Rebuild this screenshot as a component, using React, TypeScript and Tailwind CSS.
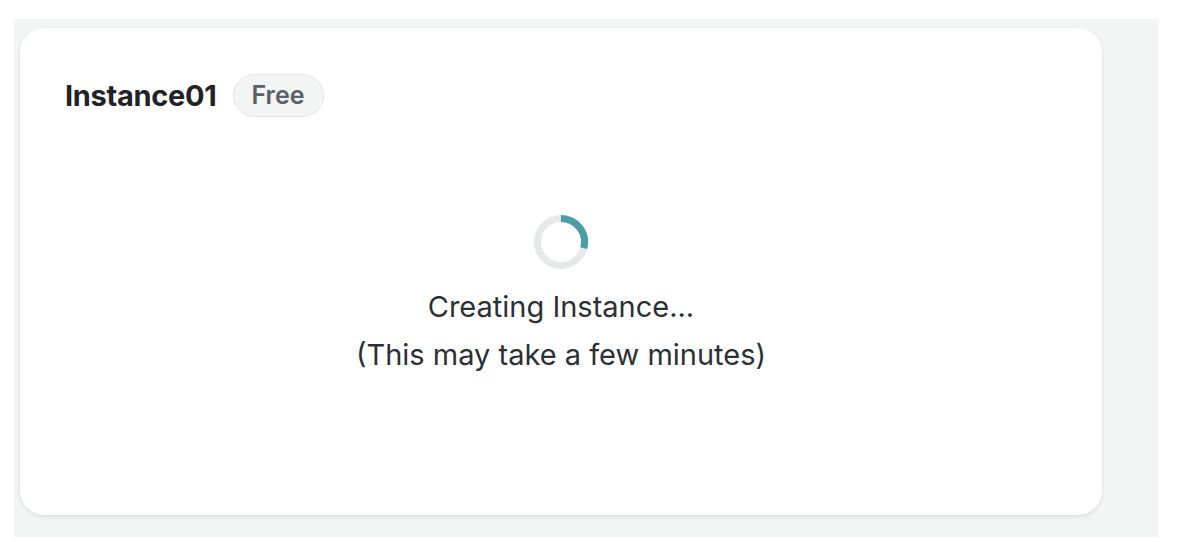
import React from 'react'

const Spinner = () => {
  return (
    <svg width="54" height="54" viewBox="0 0 54 54" fill="none">
      <circle cx="27" cy="27" r="23.5" stroke="#e6e8e9" strokeWidth="7" />
      <path d="M27 3.5 A23.5 23.5 0 0 1 49.7 33.1" stroke="#4b9ea6" strokeWidth="7" />
    </svg>
  )
}

const App = () => {
  return (
    <div className="w-full h-[542px] bg-white pl-[14px] pt-[19px] pr-[22px] pb-[5px] font-['Inter',sans-serif]">
      <div className="h-full bg-[#f3f4f4] pl-[6px] pt-[9px] pr-[56px] pb-[22px]">
        <div className="h-full bg-white rounded-[24px] shadow-[0_2px_4px_rgba(0,0,0,0.08),0_0_2px_rgba(0,0,0,0.05)] pl-[45px] pt-[46px]">
          <div className="flex items-center gap-[16px] h-[43px]">
            <span className="text-[29px] font-bold text-[#1f2328] tracking-[-0.3px]">Instance01</span>
            <span className="h-[43px] px-[18px] rounded-full bg-[#f3f4f4] border border-[#e3e5e6] flex items-center text-[25px] font-semibold text-[#5b6068]">
              Free
            </span>
          </div>
          <div className="flex flex-col items-center pr-[45px] mt-[98px]">
            <Spinner />
            <div className="mt-[14px] text-center text-[29px] leading-[48px] text-[#2d3035]">
              <p>Creating Instance...</p>
              <p>(This may take a few minutes)</p>
            </div>
          </div>
        </div>
      </div>
    </div>
  )
}

export default App
